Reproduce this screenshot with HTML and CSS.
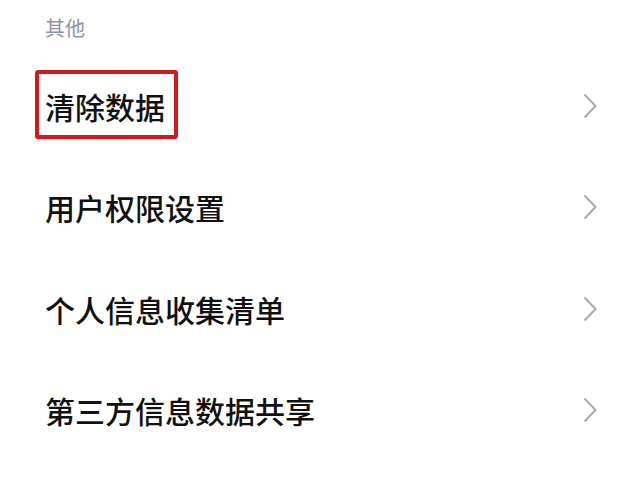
FILE: index.html
```html
<!DOCTYPE html>
<html lang="zh-CN">
<head>
<meta charset="utf-8">
<link rel="stylesheet" href="styles.css">
</head>
<body>
<div class="page">
  <div class="section-title">其他</div>
  <div class="row">
    <span class="label highlighted">清除数据</span>
    <svg class="chev" width="14" height="26" viewBox="0 0 14 26"><polyline points="1.5,1.5 12.5,13 1.5,24.5" fill="none" stroke="#a9a9a9" stroke-width="2"/></svg>
  </div>
  <div class="row">
    <span class="label">用户权限设置</span>
    <svg class="chev" width="14" height="26" viewBox="0 0 14 26"><polyline points="1.5,1.5 12.5,13 1.5,24.5" fill="none" stroke="#a9a9a9" stroke-width="2"/></svg>
  </div>
  <div class="row">
    <span class="label">个人信息收集清单</span>
    <svg class="chev" width="14" height="26" viewBox="0 0 14 26"><polyline points="1.5,1.5 12.5,13 1.5,24.5" fill="none" stroke="#a9a9a9" stroke-width="2"/></svg>
  </div>
  <div class="row">
    <span class="label">第三方信息数据共享</span>
    <svg class="chev" width="14" height="26" viewBox="0 0 14 26"><polyline points="1.5,1.5 12.5,13 1.5,24.5" fill="none" stroke="#a9a9a9" stroke-width="2"/></svg>
  </div>
</div>
</body>
</html>
```

FILE: styles.css
```css
html, body {
  margin: 0;
  padding: 0;
  background: #ffffff;
}
.page {
  width: 640px;
  height: 480px;
  overflow: hidden;
  font-family: "Noto Sans CJK SC", "Noto Sans", sans-serif;
}
.section-title {
  height: 55px;
  display: flex;
  align-items: center;
  padding-left: 45px;
  font-size: 20px;
  color: #8c93a4;
}
.row {
  height: 101.5px;
  display: flex;
  align-items: center;
  justify-content: space-between;
  padding: 0 43px 0 45px;
}
.label {
  font-size: 30px;
  line-height: 40px;
  font-weight: 500;
  color: #111111;
  position: relative;
}
.highlighted::after {
  content: "";
  position: absolute;
  top: -16px;
  left: -10px;
  right: -13px;
  bottom: -13px;
  border: 4px solid #cf1a1e;
  border-radius: 3px;
}
.chev {
  display: block;
}
```
